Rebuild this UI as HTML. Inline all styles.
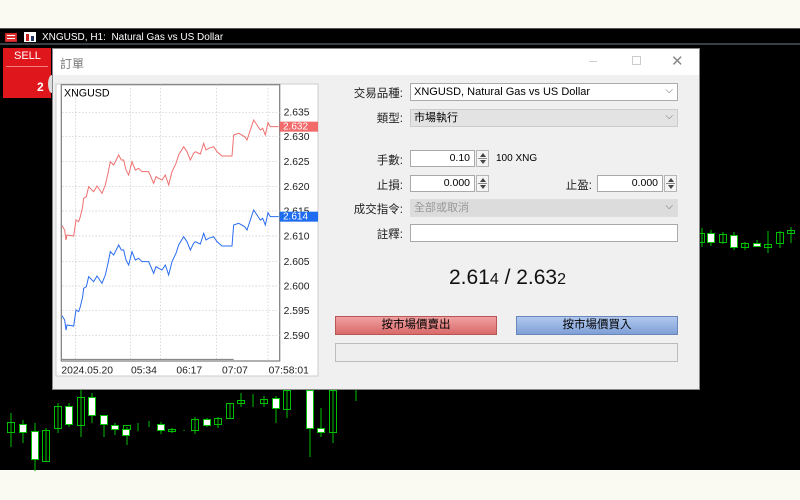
<!DOCTYPE html>
<html><head><meta charset="utf-8"><style>
*{margin:0;padding:0;box-sizing:border-box}
body{width:800px;height:500px;background:#fafaf3;position:relative;overflow:hidden;font-family:"Liberation Sans","Noto Sans CJK TC",sans-serif;font-size:11px;color:#000}
.abs{position:absolute}
.lbl{position:absolute;text-align:right;font-size:11.5px;color:#222}
.inp{position:absolute;background:#fff;border:1px solid #a9a9a9;font-size:10.5px;text-align:right;padding-right:4px;line-height:15px}
.spin{position:absolute;width:13px;height:17px;border:1px solid #b5b5b5;background:#f4f4f4}
.spin:before{content:"";position:absolute;left:3px;top:2px;border-left:3px solid transparent;border-right:3px solid transparent;border-bottom:4px solid #444}
.spin:after{content:"";position:absolute;left:3px;bottom:2px;border-left:3px solid transparent;border-right:3px solid transparent;border-top:4px solid #444}
.spin i{position:absolute;left:1px;right:1px;top:7px;border-top:1px solid #888}
.sel{position:absolute;height:18px;border:1px solid #ababab;font-size:11px;line-height:16px;padding-left:3px}
.sel:after{content:"⌵";position:absolute;right:4px;top:-1px;color:#666;font-size:10px}
</style></head><body>
<div class="abs" style="left:0;top:28px;width:800px;height:442px;background:#000"></div>
<div class="abs" style="left:0;top:28px;width:800px;height:1px;background:#555"></div>
<div class="abs" style="left:0;top:43px;width:800px;height:2px;background:#3a3f45"></div>
<div class="abs" style="left:5px;top:33px;width:12px;height:9px;background:#d33;border:1px solid #c22"></div>
<div class="abs" style="left:7px;top:35px;width:8px;height:1px;background:#fff"></div>
<div class="abs" style="left:7px;top:38px;width:8px;height:1px;background:#fff"></div>
<div class="abs" style="left:24px;top:32px;width:12px;height:10px;background:#fff"></div>
<div class="abs" style="left:26px;top:34px;width:3px;height:7px;background:#c22"></div>
<div class="abs" style="left:31px;top:36px;width:3px;height:5px;background:#236"></div>
<div class="abs" style="left:42px;top:32px;color:#fff;font-size:10px">XNGUSD, H1:&nbsp; Natural Gas vs US Dollar</div>
<div class="abs" style="left:3px;top:48px;width:48px;height:50px;background:#e0161d"></div>
<div class="abs" style="left:14px;top:50px;color:#fff;font-size:11px">SELL</div>
<div class="abs" style="left:6px;top:66px;width:42px;height:1px;background:#f08080"></div>
<div class="abs" style="left:37px;top:80px;color:#fff;font-size:12px;font-weight:bold">2</div>
<div class="abs" style="left:48px;top:75px;width:8px;height:18px;border-radius:50%;background:#ddd"></div>

<svg class="abs" style="left:0;top:0" width="800" height="500">
<g stroke="#00c000" stroke-width="1" fill="none">
<path d="M11 413V447M23 420V443M35 423V471M46 428V461M58 403V433M69 403V427M81 390V437M92 393V423M104 415V437M115 423V435M127 427V445M138 423V431M149 421V427M161 422V434M172 428V433M184 430V431M195 417V434M207 418V427M218 417V428M230 403V419M241 393V407M253 394V407M264 396V407M276 396V423M287 385V418M310 390V457M321 408V437M333 390V443M356 390V401M702 228V247M711 230V246M723 232V244M734 232V250M745 242V250M757 240V246M768 231V253M780 231V248M791 227V243"/>
<rect x="7.5" y="422.5" width="7" height="10"/><rect x="54.5" y="406.5" width="7" height="22"/><rect x="42.5" y="430.5" width="7" height="31"/><rect x="77.5" y="397.5" width="7" height="28"/><rect x="123.5" y="425.5" width="7" height="4"/><rect x="168.5" y="429.5" width="7" height="2"/><rect x="191.5" y="419.5" width="7" height="11"/><rect x="214.5" y="418.5" width="7" height="6"/><rect x="226.5" y="403.5" width="7" height="15"/><rect x="237.5" y="400.5" width="7" height="3"/><rect x="260.5" y="399.5" width="7" height="4"/><rect x="283.5" y="390.5" width="7" height="19"/><rect x="329.5" y="390.5" width="7" height="42"/><rect x="698.5" y="233.5" width="6" height="9"/><rect x="719.5" y="234.5" width="7" height="8"/><rect x="741.5" y="243.5" width="7" height="4"/><rect x="764.5" y="244.5" width="7" height="3"/><rect x="776.5" y="232.5" width="7" height="11"/><rect x="787.5" y="230.5" width="7" height="3"/>
</g>
<g fill="#fff" stroke="#00c000">
<rect x="19.5" y="424.5" width="7" height="8"/><rect x="31.5" y="431.5" width="7" height="28"/><rect x="65.5" y="406.5" width="7" height="18"/><rect x="88.5" y="397.5" width="7" height="18"/><rect x="100.5" y="415.5" width="7" height="9"/><rect x="111.5" y="425.5" width="7" height="4"/><rect x="122.5" y="429.5" width="7" height="6"/><rect x="157.5" y="424.5" width="7" height="6"/><rect x="203.5" y="419.5" width="7" height="6"/><rect x="272.5" y="398.5" width="7" height="10"/><rect x="306.5" y="390.5" width="7" height="38"/><rect x="317.5" y="428.5" width="7" height="4"/><rect x="707.5" y="233.5" width="7" height="9"/><rect x="730.5" y="235.5" width="7" height="12"/><rect x="753.5" y="243.5" width="7" height="3"/>
</g>
</svg>

<div class="abs" style="left:52px;top:48px;width:648px;height:342px;background:#f0f0f0;border:1px solid #888"></div>
<div class="abs" style="left:53px;top:49px;width:646px;height:26px;background:#fff"></div>
<div class="abs" style="left:60px;top:55px;font-size:12px;color:#777">訂單</div>
<div class="abs" style="left:589px;top:61px;width:8px;height:1px;background:#ccc"></div>
<div class="abs" style="left:632px;top:56px;width:9px;height:9px;border:1px solid #ccc"></div>
<div class="abs" style="left:671px;top:52px;font-size:15px;color:#888">✕</div>

<svg class="abs" style="left:52px;top:80px" width="270" height="300" viewBox="0 0 810 900">
<rect x="12" y="12" width="786" height="876" fill="#fff" stroke="#ccc" stroke-width="3"/>
<rect x="28" y="14" width="655" height="829" fill="#fff" stroke="#888" stroke-width="4"/>
<g stroke="#ccc" stroke-width="2" stroke-dasharray="5,5">
<path d="M30 97H683M30 170H683M30 245H683M30 320H683M30 393H683M30 468H683M30 545H683M30 618H683M30 692H683M30 767H683M70 14V843M235 14V843M325 14V843M493 14V843M648 14V843"/>
</g>
<g stroke="#777" stroke-width="3"><path d="M30 838H545"/></g>
<text x="36" y="50" font-size="32" font-family="Liberation Sans">XNGUSD</text>
<g font-size="31" font-family="Liberation Sans" fill="#222">
<text x="695" y="107">2.635</text><text x="695" y="180">2.630</text><text x="695" y="255">2.625</text><text x="695" y="330">2.620</text><text x="695" y="403">2.615</text><text x="695" y="478">2.610</text><text x="695" y="555">2.605</text><text x="695" y="628">2.600</text><text x="695" y="702">2.595</text><text x="695" y="777">2.590</text>
<text x="28" y="880">2024.05.20</text><text x="237" y="880">05:34</text><text x="373" y="880">06:17</text><text x="510" y="880">07:07</text><text x="650" y="880">07:58:01</text>
</g>
<g fill="none" stroke-width="3">
<path stroke="#f07070" d="M30 437L38 450L42 480L45 465L65 468L72 420L80 425L85 410L92 380L95 355L103 350L110 320L125 335L135 318L150 340L160 315L168 280L175 245L185 255L200 225L208 240L215 240L222 270L230 285L240 245L250 270L260 265L270 275L290 275L305 310L312 290L320 295L330 300L340 285L350 315L360 275L372 250L380 225L395 200L405 215L415 240L425 220L430 215L445 222L455 190L462 210L470 205L485 200L495 215L510 228L540 228L545 165L560 160L578 170L585 180L595 150L605 120L615 135L625 150L632 145L640 165L648 128L655 140L680 140"/>
<path stroke="#2a6cf0" transform="translate(0,270)" d="M30 437L38 450L42 480L45 465L65 468L72 420L80 425L85 410L92 380L95 355L103 350L110 320L125 335L135 318L150 340L160 315L168 280L175 245L185 255L200 225L208 240L215 240L222 270L230 285L240 245L250 270L260 265L270 275L290 275L305 310L312 290L320 295L330 300L340 285L350 315L360 275L372 250L380 225L395 200L405 215L415 240L425 220L430 215L445 222L455 190L462 210L470 205L485 200L495 215L510 228L540 228L545 165L560 160L578 170L585 180L595 150L605 120L615 135L625 150L632 145L640 165L648 128L655 140L680 140"/>
</g>
<rect x="683" y="125" width="115" height="30" fill="#f26a6a"/><text x="693" y="149" font-size="30" fill="#fff" font-family="Liberation Sans">2.632</text>
<rect x="683" y="395" width="115" height="30" fill="#1e6cf0"/><text x="693" y="419" font-size="30" fill="#fff" font-family="Liberation Sans">2.614</text>
</svg>

<div class="lbl" style="left:330px;top:85px;width:73px">交易品種:</div>
<div class="sel" style="left:410px;top:83px;width:268px;background:#fff">XNGUSD, Natural Gas vs US Dollar</div>
<div class="lbl" style="left:330px;top:110px;width:73px">類型:</div>
<div class="sel" style="left:410px;top:109px;width:268px;background:#e3e3e3;border-color:#ccc">市場執行</div>
<div class="lbl" style="left:330px;top:152px;width:73px">手數:</div>
<div class="inp" style="left:410px;top:150px;width:65px;height:17px">0.10</div>
<div class="spin" style="left:476px;top:150px"><i></i></div>
<div class="abs" style="left:496px;top:153px;font-size:10px">100 XNG</div>
<div class="lbl" style="left:330px;top:177px;width:73px">止損:</div>
<div class="inp" style="left:410px;top:175px;width:65px;height:17px">0.000</div>
<div class="spin" style="left:476px;top:175px"><i></i></div>
<div class="lbl" style="left:530px;top:177px;width:62px">止盈:</div>
<div class="inp" style="left:597px;top:175px;width:66px;height:17px">0.000</div>
<div class="spin" style="left:664px;top:175px"><i></i></div>
<div class="lbl" style="left:330px;top:201px;width:73px">成交指令:</div>
<div class="sel" style="left:410px;top:199px;width:268px;background:#dcdcdc;border-color:#ddd;color:#999">全部或取消</div>
<div class="lbl" style="left:330px;top:226px;width:73px">註釋:</div>
<div class="inp" style="left:410px;top:224px;width:268px;height:18px"></div>
<div class="abs" style="left:330px;top:266px;width:355px;text-align:center;font-size:21px;color:#111">2.61<span style="font-size:16px">4</span> / 2.63<span style="font-size:16px">2</span></div>
<div class="abs" style="left:335px;top:316px;width:162px;height:19px;background:linear-gradient(#f0a0a0,#d96a6a);border:1px solid #b85555;text-align:center;line-height:17px;font-size:11.5px">按市場價賣出</div>
<div class="abs" style="left:516px;top:316px;width:162px;height:19px;background:linear-gradient(#b0c8ee,#7f9fd6);border:1px solid #6a86bb;text-align:center;line-height:17px;font-size:11.5px">按市場價買入</div>
<div class="abs" style="left:335px;top:343px;width:343px;height:19px;background:#eee;border:1px solid #bcbcbc"></div>
</body></html>
